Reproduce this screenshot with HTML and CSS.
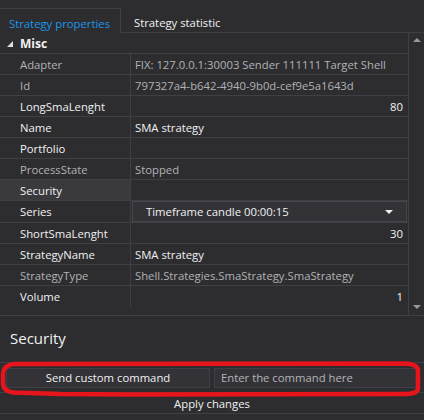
FILE: index.html
```html
<!DOCTYPE html>
<html>
<head>
<meta charset="utf-8">
<link rel="stylesheet" href="styles.css">
</head>
<body>
<div class="app">
  <div class="tabs">
    <div class="tab active">Strategy properties</div>
    <div class="tab">Strategy statistic</div>
  </div>
  <div class="grid">
    <div class="rows">
      <div class="cat"><span class="exp"></span>Misc</div>
      <div class="row"><div class="name ro">Adapter</div><div class="val ro">FIX: 127.0.0.1:30003 Sender 111111 Target Shell</div></div>
      <div class="row"><div class="name ro">Id</div><div class="val ro">797327a4-b642-4940-9b0d-cef9e5a1643d</div></div>
      <div class="row"><div class="name">LongSmaLenght</div><div class="val num">80</div></div>
      <div class="row"><div class="name">Name</div><div class="val">SMA strategy</div></div>
      <div class="row"><div class="name">Portfolio</div><div class="val"></div></div>
      <div class="row"><div class="name ro">ProcessState</div><div class="val ro">Stopped</div></div>
      <div class="row sel"><div class="name">Security</div><div class="val"></div></div>
      <div class="row tall"><div class="name">Series</div><div class="val combo-cell"><div class="combo"><span>Timeframe candle 00:00:15</span><span class="arrow"></span></div></div></div>
      <div class="row"><div class="name">ShortSmaLenght</div><div class="val num">30</div></div>
      <div class="row"><div class="name">StrategyName</div><div class="val">SMA strategy</div></div>
      <div class="row"><div class="name ro">StrategyType</div><div class="val ro">Shell.Strategies.SmaStrategy.SmaStrategy</div></div>
      <div class="row last"><div class="name">Volume</div><div class="val num">1</div></div>
      <div class="fill"><div class="fill-name"></div><div class="fill-val"></div></div>
    </div>
    <div class="scroll">
      <span class="up"></span>
      <span class="down"></span>
    </div>
  </div>
  <div class="desc">Security</div>
  <div class="cmd">
    <div class="btn">Send custom command</div>
    <div class="input">Enter the command here</div>
    <svg class="mark" width="424" height="40" viewBox="0 0 424 40">
      <path d="M14 3 L405 2.5 Q418 3 418 10 L418 27 Q418 33 405 33 L130 33.5 L60 33 L14 31.5 Q3 30.5 3 22 L3 12 Q4 4 14 3 Z" fill="none" stroke="#e8141c" stroke-width="4.5" stroke-linejoin="round"/>
    </svg>
  </div>
  <div class="apply">Apply changes</div>
</div>
</body>
</html>
```

FILE: styles.css
```css
html, body {
  margin: 0;
  padding: 0;
  background: #2d2d30;
}
body {
  font-family: "Open Sans", "Noto Sans", sans-serif;
  font-size: 11.3px;
  color: #f1f1f1;
  width: 424px;
  height: 420px;
  overflow: hidden;
}
.app {
  display: flex;
  flex-direction: column;
  height: 420px;
}
.tabs {
  height: 33px;
  box-sizing: border-box;
  display: flex;
  align-items: flex-end;
  border-bottom: 1px solid #3f3f46;
}
.tab {
  height: 25px;
  box-sizing: border-box;
  padding: 5px 9px 0 9px;
  line-height: 19px;
  color: #f1f1f1;
  margin-bottom: -1px;
}
.tab:nth-child(2) {
  padding-left: 13px;
}
.tab.active {
  width: 121px;
  color: #1c97ea;
  border-top: 1px solid #3f3f46;
  border-right: 1px solid #3f3f46;
  border-bottom: 1px solid #2d2d30;
}
.grid {
  display: flex;
  height: 282px;
  border-bottom: 1px solid #3f3f46;
}
.rows {
  flex: 1;
  display: flex;
  flex-direction: column;
}
.cat {
  height: 21px;
  box-sizing: border-box;
  border-bottom: 1px solid #3f3f46;
  font-weight: bold;
  font-size: 12px;
  padding-top: 2px;
  line-height: 18px;
  display: flex;
  align-items: center;
}
.exp {
  width: 0;
  height: 0;
  border-left: 6px solid transparent;
  border-bottom: 6px solid #e0e0e0;
  margin: 0 7px 0 7px;
}
.row {
  height: 21px;
  box-sizing: border-box;
  border-bottom: 1px solid #3f3f46;
  display: flex;
}
.row.tall {
  height: 22px;
}
.row.last {
  border-bottom: none;
}
.name {
  width: 131px;
  box-sizing: border-box;
  border-right: 1px solid #3f3f46;
  padding-left: 20px;
  padding-top: 2px;
  line-height: 18px;
  white-space: nowrap;
}
.val {
  flex: 1;
  padding-left: 4px;
  padding-right: 5px;
  padding-top: 2px;
  line-height: 18px;
  white-space: nowrap;
  overflow: hidden;
}
.ro {
  color: #b2b2b6;
}
.num {
  text-align: right;
}
.row.sel {
  background: #3a3a3d;
}
.row.sel .val {
  background: #2d2d30;
}
.combo-cell {
  padding: 0 1px 0 1px;
}
.combo {
  height: 21px;
  box-sizing: border-box;
  border: 1px solid #46464c;
  background: #333337;
  display: flex;
  align-items: center;
  justify-content: space-between;
  padding-left: 13px;
  padding-right: 13px;
  padding-top: 1px;
  line-height: 18px;
}
.arrow {
  width: 0;
  height: 0;
  border-left: 4px solid transparent;
  border-right: 4px solid transparent;
  border-top: 4px solid #f1f1f1;
}
.fill {
  flex: 1;
  display: flex;
}
.fill-name {
  width: 131px;
  border-right: 1px solid transparent;
}
.scroll {
  width: 15px;
  border-left: 1px solid #3f3f46;
  position: relative;
}
.scroll .up, .scroll .down {
  position: absolute;
  left: 4px;
  width: 0;
  height: 0;
  border-left: 4px solid transparent;
  border-right: 4px solid transparent;
}
.scroll .up {
  top: 5px;
  border-bottom: 4px solid #999;
}
.scroll .down {
  bottom: 6px;
  border-top: 4px solid #999;
}
.desc {
  height: 47px;
  box-sizing: border-box;
  padding-left: 10px;
  font-size: 15px;
  line-height: 44px;
  border-bottom: 1px solid #3f3f46;
}
.cmd {
  height: 30px;
  box-sizing: border-box;
  display: flex;
  align-items: center;
  gap: 4px;
  padding: 0 4px 0 6px;
  border-bottom: 1px solid #3f3f46;
  position: relative;
}
.btn {
  width: 204px;
  height: 20px;
  box-sizing: border-box;
  border: 1px solid #3f3f46;
  background: #333337;
  text-align: center;
  line-height: 18px;
}
.input {
  flex: 1;
  height: 20px;
  box-sizing: border-box;
  border: 1px solid #3f3f46;
  background: #333337;
  color: #b4b4b8;
  padding-left: 6px;
  line-height: 18px;
}
.mark {
  position: absolute;
  left: 0;
  top: -2px;
}
.apply {
  height: 21px;
  box-sizing: border-box;
  text-align: center;
  padding-top: 1px;
  line-height: 19px;
  border-bottom: 1px solid #3f3f46;
}
```
